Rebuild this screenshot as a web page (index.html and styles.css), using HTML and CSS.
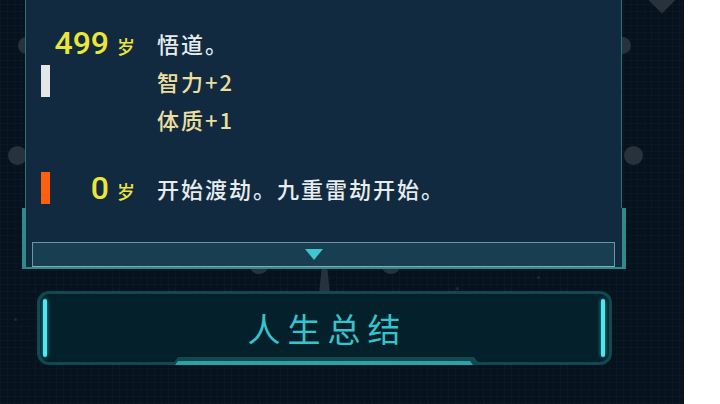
FILE: index.html
```html
<!DOCTYPE html>
<html lang="zh-CN">
<head>
<meta charset="utf-8">
<title>人生总结</title>
<link rel="stylesheet" href="styles.css">
</head>
<body>
<div class="stage">
  <div class="deco">
    <span class="dot c1"></span>
    <span class="dot c2"></span>
    <span class="dot c3"></span>
    <span class="dot c4"></span>
    <span class="dot c5"></span>
    <span class="dot c6"></span>
    <span class="diamond"></span>
    <span class="stem"></span>
    <span class="speck s1"></span>
    <span class="speck s2"></span>
    <span class="speck s3"></span>
  </div>

  <section class="panel">
    <div class="log">
      <div class="entry">
        <span class="mark mark-white"></span>
        <div class="age"><span class="num">499</span><span class="unit">岁</span></div>
        <div class="lines">
          <p class="line white">悟道。</p>
          <p class="line gold">智力+2</p>
          <p class="line gold">体质+1</p>
        </div>
      </div>
      <div class="entry entry-second">
        <span class="mark mark-orange"></span>
        <div class="age"><span class="num">0</span><span class="unit">岁</span></div>
        <div class="lines">
          <p class="line white">开始渡劫。九重雷劫开始。</p>
        </div>
      </div>
    </div>
    <div class="foot">
      <div class="scroll"><span class="tri"></span></div>
    </div>
  </section>

  <button class="summary">
    <span class="glow glow-left"></span>
    <span class="label">人生总结</span>
    <span class="glow glow-right"></span>
  </button>
</div>
</body>
</html>
```

FILE: styles.css
```css
html, body {
  margin: 0;
  padding: 0;
  background: #ffffff;
}

body {
  font-family: "Noto Sans CJK SC", "Noto Sans", sans-serif;
}

.stage {
  position: relative;
  width: 684px;
  height: 404px;
  overflow: hidden;
  background-color: #06121d;
  background-image:
    repeating-linear-gradient(0deg, rgba(120, 170, 200, 0.035) 0 1px, transparent 1px 7px),
    repeating-linear-gradient(90deg, rgba(120, 170, 200, 0.035) 0 1px, transparent 1px 7px);
}

/* background decorations on the free canvas */
.deco span {
  position: absolute;
  display: block;
  background: #27323d;
}
.dot { border-radius: 50%; }
.c1 { left: 18px; top: 37px; width: 17px; height: 17px; }
.c2 { left: 8px; top: 146px; width: 19px; height: 19px; }
.c3 { left: 614px; top: 37px; width: 17px; height: 17px; }
.c4 { left: 624px; top: 146px; width: 19px; height: 19px; }
.c5 { left: 250px; top: 259px; width: 18px; height: 15px; }
.c6 { left: 382px; top: 259px; width: 18px; height: 15px; }
.diamond {
  left: 650px; top: -12px; width: 24px; height: 24px;
  transform: rotate(45deg) scale(0.8);
}
.stem {
  left: 319px; top: 262px; width: 11px; height: 32px;
  clip-path: polygon(30% 0, 70% 0, 100% 100%, 0 100%);
}
.speck { width: 3px; height: 3px; border-radius: 50%; background: #1f2a35 !important; }
.s1 { left: 14px; top: 318px; }
.s2 { left: 537px; top: 276px; }
.s3 { left: 456px; top: 287px; }

/* panel */
.panel {
  position: relative;
  z-index: 1;
  margin-left: 22px;
  width: 604px;
}

.log {
  box-sizing: border-box;
  height: 208px;
  margin: 0 4px 0 3px;
  padding-top: 24px;
  background: #112a40;
  border-left: 1px solid #2c7279;
  border-right: 1px solid #2c7279;
}

.entry {
  display: flex;
  padding-left: 15px;
}
.entry-second { margin-top: 31px; }

.mark {
  align-self: center;
  width: 9px;
  height: 32px;
  flex: none;
}
.mark-white { background: #e4e6e8; }
.mark-orange { background: #ff5f0f; }

.age {
  width: 85px;
  height: 38px;
  margin-right: 22px;
  display: flex;
  justify-content: flex-end;
  align-items: baseline;
  line-height: 38px;
  color: #ece63b;
  flex: none;
}
.num {
  font-family: Roboto, "Noto Sans", sans-serif;
  font-size: 32px;
  font-weight: 500;
  margin-right: 8px;
}
.unit {
  font-size: 18px;
  font-weight: 500;
}

.lines { flex: 1; }
.line {
  margin: 0;
  font-size: 22px;
  font-weight: 500;
  line-height: 38px;
  height: 38px;
  letter-spacing: 2px;
}
.white { color: #e8ecee; }
.gold { color: #ecdf9e; }

.foot {
  box-sizing: border-box;
  height: 61px;
  padding: 34px 7px 0 6px;
  background: #112a40;
  border-left: 4px solid #2f8a8a;
  border-right: 4px solid #2f8a8a;
  border-bottom: 2px solid #2f8a8a;
}

.scroll {
  box-sizing: border-box;
  height: 25px;
  background: #183e51;
  border: 1px solid #6a97a3;
  border-bottom-color: #86aab4;
  display: flex;
}
.tri {
  display: block;
  width: 18px;
  height: 11px;
  margin: 6px 0 0 272px;
  background: #3fc6d0;
  clip-path: polygon(0 0, 100% 0, 50% 100%);
}

/* summary button */
.summary {
  position: relative;
  box-sizing: border-box;
  display: flex;
  align-items: center;
  width: 575px;
  height: 74px;
  margin: 22px 0 0 37px;
  padding: 0;
  border: 3px solid #124850;
  border-radius: 12px;
  background: #04202a;
  font-family: "Noto Sans CJK SC", "Noto Sans", sans-serif;
  cursor: pointer;
}
.summary::before {
  content: "";
  position: absolute;
  left: 132px;
  bottom: -3px;
  width: 308px;
  height: 8px;
  background: #124850;
  clip-path: polygon(6px 0, calc(100% - 6px) 0, 100% 100%, 0 100%);
}
.summary::after {
  content: "";
  position: absolute;
  left: 135px;
  bottom: -3px;
  width: 298px;
  height: 4px;
  background: #2aa2a6;
  clip-path: polygon(3px 0, calc(100% - 3px) 0, 100% 100%, 0 100%);
}

.glow {
  display: block;
  width: 4px;
  height: 58px;
  border-radius: 2px;
  background: #4fe8ee;
  box-shadow: 0 0 4px rgba(60, 220, 230, 0.7);
  flex: none;
}
.glow-left { margin-left: 3px; }
.glow-right { margin-right: 4px; }

.label {
  flex: 1;
  text-align: center;
  font-size: 33px;
  font-weight: 400;
  letter-spacing: 7px;
  padding-left: 7px;
  color: #36c4cc;
  line-height: 1;
}
```
